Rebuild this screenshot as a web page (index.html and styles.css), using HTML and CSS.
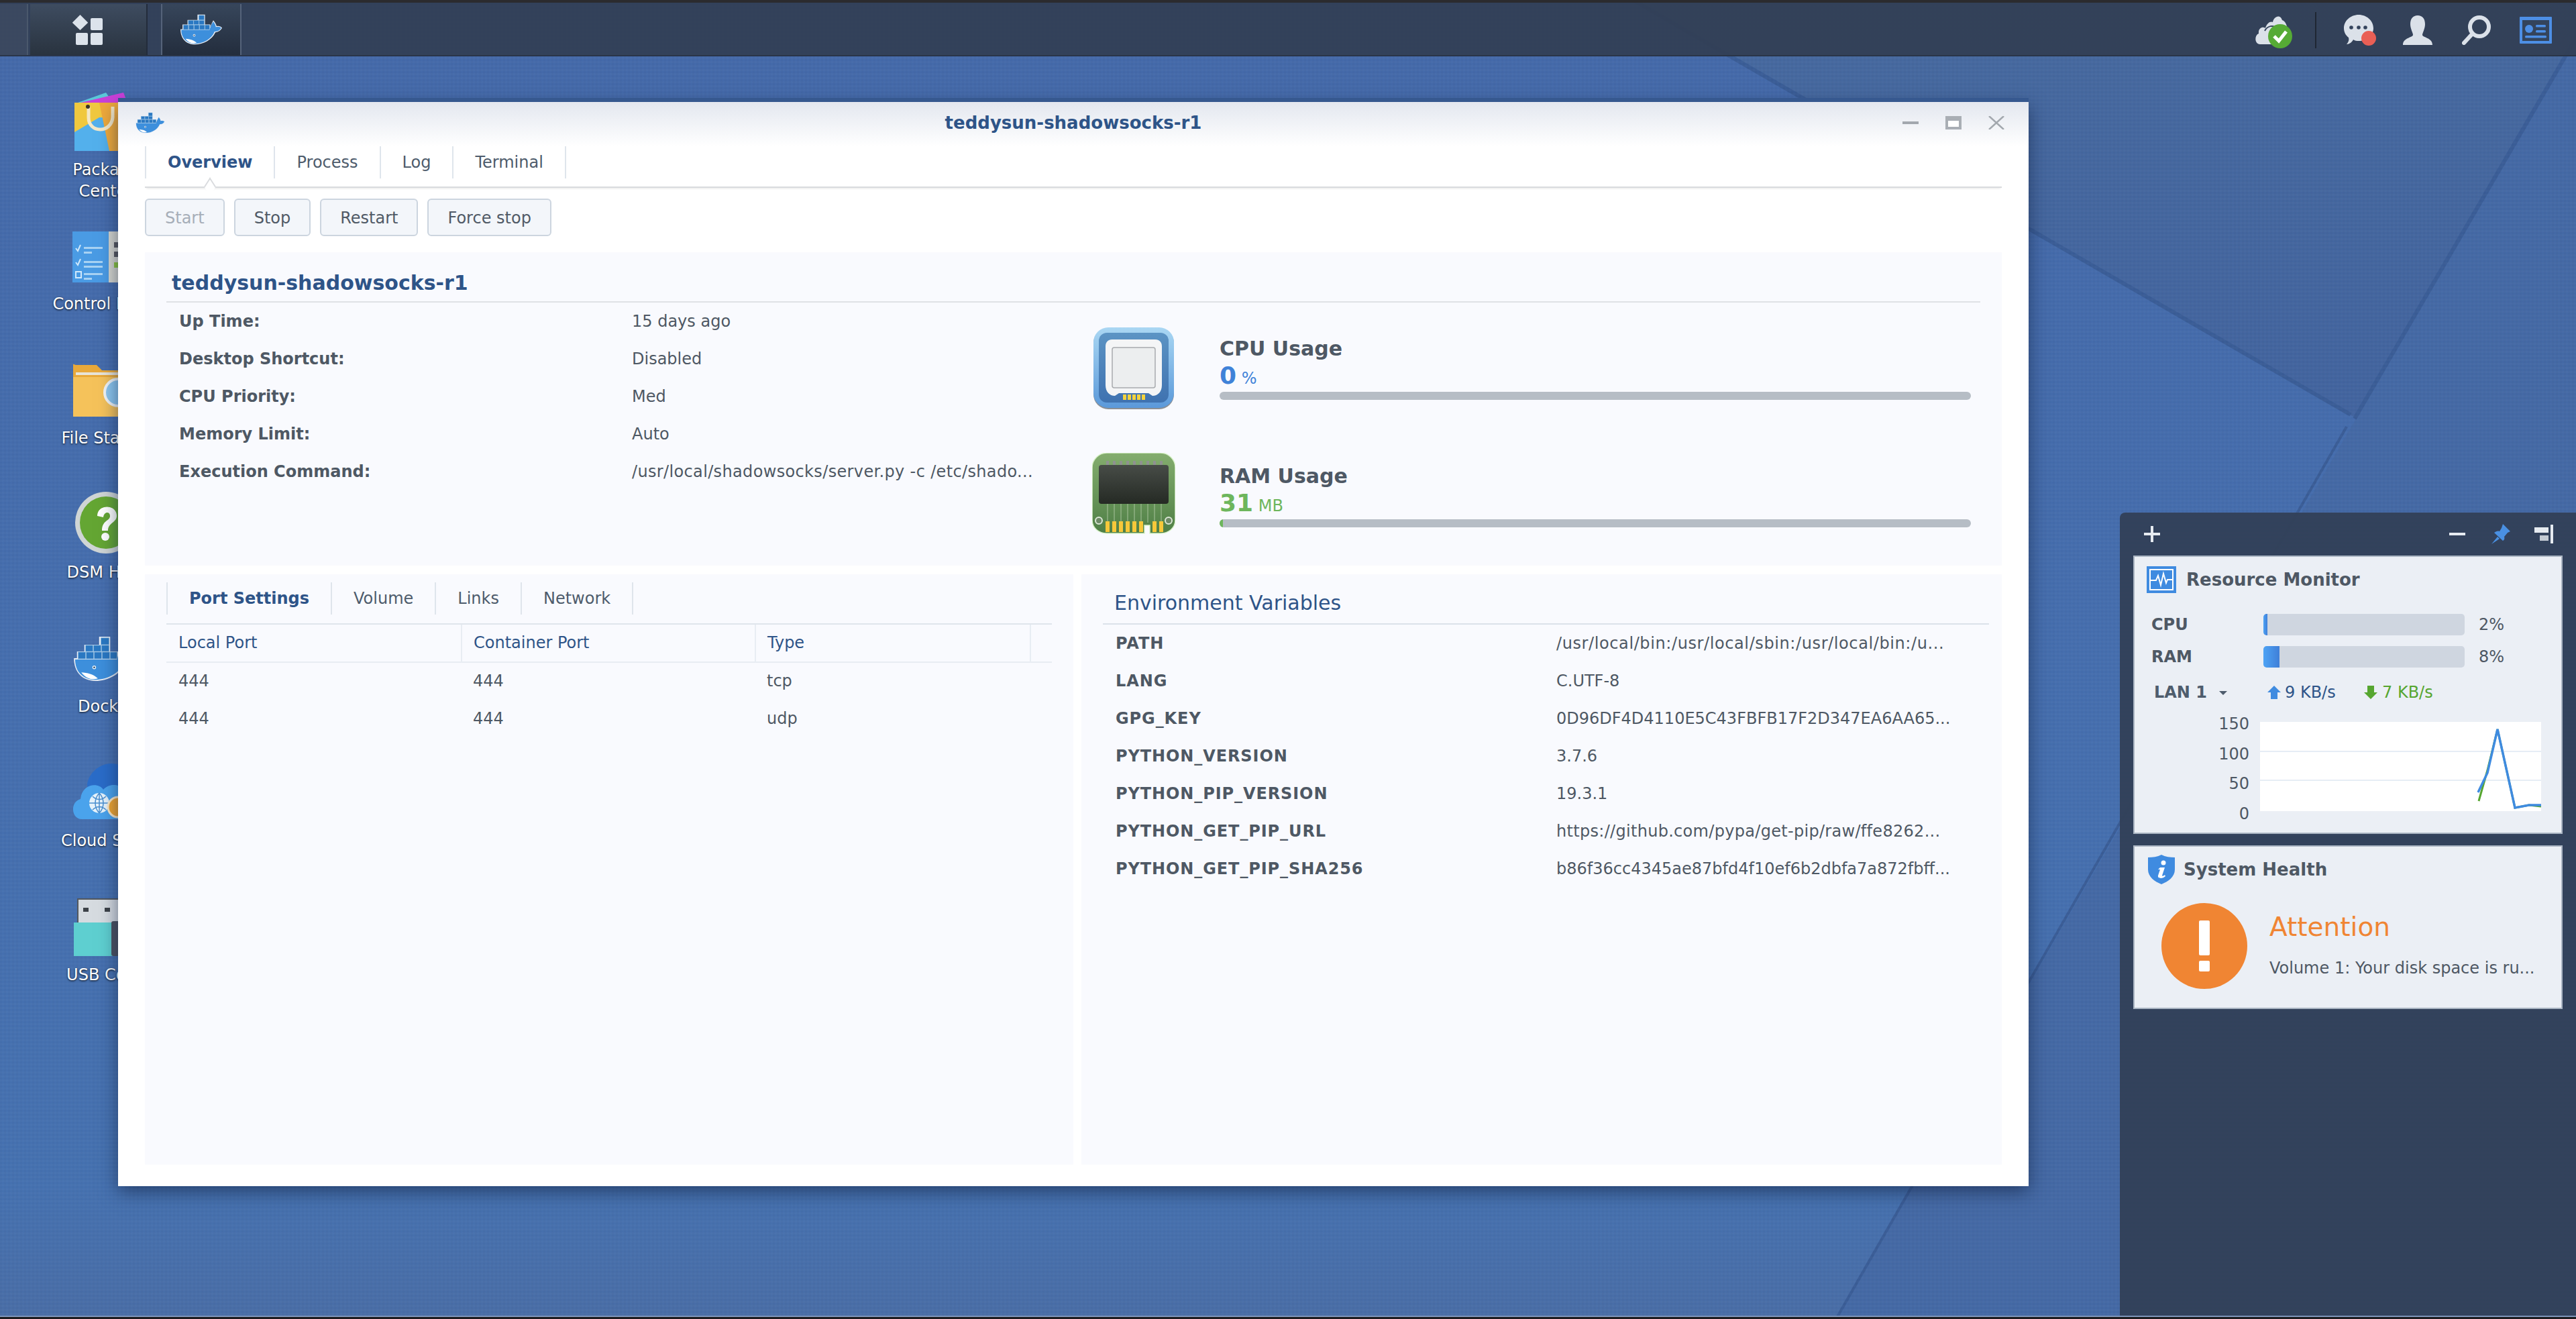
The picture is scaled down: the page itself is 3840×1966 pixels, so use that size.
FILE: index.html
```html
<!DOCTYPE html>
<html lang="en">
<head>
    <meta charset="UTF-8">
    <title>teddysun-shadowsocks-r1</title>
    <link rel="stylesheet" href="styles.css">
</head>
<body>
    <svg class="sprites" width="0" height="0">
        <symbol id="whale" viewBox="0 0 100 72">
            <path d="M41 0H59V13H59V24H72V38H70C72 28 75 22 79 14C83 19 86 24 87 28C92 27 97 28 100 32C96 40 89 42 84 43C76 61 55 72 35 72C14 72 0 58 0 35H5V24H17V13H41Z" fill="#e8eef5"/>
            <path d="M2 37H70C72 29 75 23 79 17C82 21 85 26 85 30C90 29 94 29 98 32C94 39 88 41 82 41C75 59 55 70 35 70C15 70 2 57 2 37Z" fill="#3d8fdc"/>
            <g fill="#2a78c2" stroke="#86b6dd" stroke-width=".8">
                <rect x="44" y="2" width="13" height="11"/>
                <rect x="19" y="14" width="12" height="10"/><rect x="32" y="14" width="12" height="10"/><rect x="45" y="14" width="12" height="10"/>
                <rect x="7" y="25" width="12" height="11"/><rect x="20" y="25" width="12" height="11"/><rect x="33" y="25" width="12" height="11"/><rect x="46" y="25" width="12" height="11"/><rect x="59" y="25" width="11" height="11"/>
            </g>
            <path d="M12 58C22 59 31 60 39 68C28 71 19 67 12 58Z" fill="#fff"/>
            <circle cx="33" cy="50" r="3" fill="#e8f2fb"/>
            <circle cx="33" cy="50" r="1.4" fill="#27435f"/>
        </symbol>
    </svg>

    <svg class="wallpaper" viewBox="0 0 3840 1966" preserveAspectRatio="none">
        <defs>
            <linearGradient id="wall-main" x1="0" y1="0" x2="0" y2="1">
                <stop offset="0" stop-color="#4469a9"/>
                <stop offset=".5" stop-color="#456eae"/>
                <stop offset=".9" stop-color="#4571b0"/>
                <stop offset="1" stop-color="#496da6"/>
            </linearGradient>
            <linearGradient id="wall-dark" x1="0" y1="0" x2="0" y2="1">
                <stop offset="0" stop-color="#46699f"/>
                <stop offset="1" stop-color="#42649f"/>
            </linearGradient>
        </defs>
        <rect width="3840" height="1966" fill="url(#wall-main)"/>
        <polygon points="2434,0 3840,0 3840,60 3510,622" fill="url(#wall-dark)"/>
        <polygon points="3840,60 3512,624 2737,1966 3840,1966" fill="#4469a5"/>
        <polyline points="2434,0 3504,618" fill="none" stroke="#3a5d97" stroke-width="6"/>
        <polyline points="3838,60 3510,624" fill="none" stroke="#3a5d97" stroke-width="6"/>
        <polyline points="3498,636 2737,1966" fill="none" stroke="#3a5d97" stroke-width="4"/>
    </svg>
    <div class="weave"></div>

    <header class="taskbar">
        <div class="bar-stub"></div>
        <div class="bar-start">
            <svg class="start-icon" viewBox="0 0 45 45">
                <polygon points="11.500,0 23,11.500 23,12 11.500,23 0,12 0,11.500" fill="#dce3eb"/>
                <rect x="27" y="5" width="18" height="18" rx="2" fill="#dce3eb"/>
                <rect x="5" y="27" width="18" height="18" rx="2" fill="#dce3eb"/>
                <rect x="27" y="27" width="18" height="18" rx="2" fill="#dce3eb"/>
            </svg>
        </div>
        <div class="bar-app">
            <svg class="bar-whale"><use href="#whale"/></svg>
        </div>
        <div class="tray">
            <svg class="tray-cloud" viewBox="0 0 56 50">
                <path d="M8 44C0 44 -1 31 6 28C5 20 12 17 16 20C18 12 24 9 27 11C28 3 38 -2 41 8C47 10 50 20 48 26L46 44Z" fill="#dbe1e9"/>
                <path d="M15 24C19 16 28 15 33 20" fill="none" stroke="#34445c" stroke-width="2"/>
                <ellipse cx="38" cy="32" rx="18" ry="18" fill="#56ab35"/>
                <path d="M29 32L36 39L47 25" fill="none" stroke="#fff" stroke-width="5"/>
            </svg>
            <div class="tray-sep"></div>
            <svg class="tray-chat" viewBox="0 0 48 46">
                <path d="M22 0C34 0 44 9 44 20C44 31 34 39 22 39C19 39 17 39 14 37C12 41 8 44 4 44C7 41 8 37 7 34C2 30 0 25 0 20C0 9 10 0 22 0Z" fill="#dbe1e9"/>
                <circle cx="11" cy="19" r="2.800" fill="#34445c"/><circle cx="22" cy="19" r="2.800" fill="#34445c"/><circle cx="32" cy="19" r="2.800" fill="#34445c"/>
                <ellipse cx="37" cy="35" rx="11" ry="11" fill="#e95f55"/>
            </svg>
            <svg class="tray-user" viewBox="0 0 44 44">
                <path d="M22 0C29 0 33 5 33 13C33 20 29 26 29 29C29 33 44 33 44 44H0C0 33 15 33 15 29C15 26 11 20 11 13C11 5 15 0 22 0Z" fill="#dbe1e9"/>
            </svg>
            <svg class="tray-search" viewBox="0 0 44 44">
                <circle cx="26" cy="17" r="14" fill="none" stroke="#dbe1e9" stroke-width="6"/>
                <path d="M14 29L3 41" stroke="#dbe1e9" stroke-width="6" stroke-linecap="round"/>
            </svg>
            <svg class="tray-card" viewBox="0 0 48 40">
                <rect width="48" height="40" rx="1" fill="#4d8fe6"/>
                <rect x="4" y="5" width="40" height="31" fill="#34445c"/>
                <ellipse cx="14" cy="18" rx="6" ry="6" fill="#4d8fe6"/>
                <rect x="24" y="12" width="15" height="3.500" rx="1.500" fill="#4d8fe6"/>
                <rect x="24" y="20" width="15" height="3.500" rx="1.500" fill="#4d8fe6"/>
                <rect x="8" y="28" width="32" height="3.500" rx="1.500" fill="#4d8fe6"/>
            </svg>
        </div>
    </header>

    <nav class="desk-icons">
        <div class="desk-item">
            <svg class="desk-icon" viewBox="0 0 100 100">
                <polygon points="8,28 50,13 60,28" fill="#5ac8d8"/>
                <polygon points="12,28 76,13 82,28" fill="#c940d8"/>
                <rect x="3" y="28" width="96" height="72" fill="#f0c83f"/>
                <polygon points="3,72 3,100 55,100 63,50 40,50" fill="#53b0ec"/>
                <polygon points="40,28 99,28 99,100 55,100" fill="#eea93b"/>
                <path d="M24 34V50C24 74 58 74 60 50V34" fill="none" stroke="#f3e8c8" stroke-width="5"/>
                <circle cx="23" cy="34" r="3" fill="#3a3325"/>
            </svg>
            <div class="desk-label">Package<br>Center</div>
        </div>
        <div class="desk-item">
            <svg class="desk-icon" viewBox="0 0 100 100">
                <rect x="0" y="20" width="100" height="76" fill="#4a9be4"/>
                <rect x="54" y="20" width="46" height="76" fill="#d6d6ce"/>
                <rect x="62" y="36" width="8" height="8" fill="#58585c"/><rect x="62" y="50" width="8" height="8" fill="#58585c"/><rect x="62" y="66" width="8" height="8" fill="#8cc63f"/>
                <path d="M5 45L8 49L12 40M5 66L8 70L12 61" fill="none" stroke="#d0e8fb" stroke-width="2"/>
                <rect x="5" y="80" width="8" height="9" fill="none" stroke="#d0e8fb" stroke-width="2"/>
                <g fill="#a8d2f3">
                    <rect x="17" y="43" width="28" height="3"/><rect x="17" y="50" width="12" height="3"/><rect x="17" y="64" width="28" height="3"/><rect x="17" y="71" width="28" height="3"/><rect x="17" y="82" width="28" height="3"/><rect x="17" y="89" width="12" height="3"/>
                </g>
            </svg>
            <div class="desk-label">Control Panel</div>
        </div>
        <div class="desk-item">
            <svg class="desk-icon" viewBox="0 0 100 100">
                <path d="M1 19C1 16 3 19 6 19H36L44 27H99V96H1Z" fill="#e9a93a"/>
                <path d="M1 37H99V96H1Z" fill="#f5c25a"/>
                <rect x="5" y="30" width="90" height="4" fill="#e8e4d8"/>
                <circle cx="68" cy="60" r="20" fill="#8cc6ee" stroke="#f0f4f6" stroke-width="4"/>
            </svg>
            <div class="desk-label">File Station</div>
        </div>
        <div class="desk-item">
            <svg class="desk-icon" viewBox="0 0 100 100">
                <circle cx="50" cy="54" r="46" fill="#cfd5d5"/>
                <circle cx="50" cy="54" r="39" fill="#64a633"/>
                <path d="M37 44C37 26 66 26 66 44C66 54 53 54 53 66H44C44 50 56 52 56 44C56 37 47 37 46 46Z" fill="#fff"/>
                <circle cx="49" cy="75" r="6" fill="#fff"/>
            </svg>
            <div class="desk-label">DSM Help</div>
        </div>
        <div class="desk-item">
            <svg class="desk-icon" viewBox="0 0 100 100">
                <use href="#whale" x="2" y="24" width="92" height="66"/>
            </svg>
            <div class="desk-label">Docker</div>
        </div>
        <div class="desk-item">
            <svg class="desk-icon" viewBox="0 0 100 100">
                <path d="M22 46C22 28 44 8 66 14C84 18 92 34 90 50L70 70H30Z" fill="#2a6cc8"/>
                <path d="M14 96C-2 96 -4 70 12 66C14 44 38 40 46 52C58 38 84 46 82 68C98 70 100 96 84 96Z" fill="#4aa3ec"/>
                <circle cx="40" cy="72" r="15" fill="#e6f3fb"/>
                <path d="M25 72H55M40 57V87M30 62C36 68 44 68 50 62M30 82C36 76 44 76 50 82M40 57C32 66 32 78 40 87M40 57C48 66 48 78 40 87" fill="none" stroke="#4a8fcf" stroke-width="1.500"/>
                <circle cx="68" cy="78" r="15" fill="#f0a52f" stroke="#fbe9c8" stroke-width="3"/>
            </svg>
            <div class="desk-label">Cloud Sync</div>
        </div>
        <div class="desk-item">
            <svg class="desk-icon" viewBox="0 0 100 100">
                <rect x="8" y="15" width="62" height="40" fill="#d6dbe0" stroke="#53585e" stroke-width="2"/>
                <rect x="16" y="28" width="8" height="6" fill="#3d4248"/><rect x="48" y="28" width="8" height="6" fill="#3d4248"/>
                <rect x="2" y="50" width="62" height="50" fill="#5ecfd0"/>
                <rect x="58" y="48" width="42" height="52" rx="3" fill="#4d5260"/>
            </svg>
            <div class="desk-label">USB Copy</div>
        </div>
    </nav>

    <main class="window">
        <div class="title-bar">
            <svg class="title-whale"><use href="#whale"/></svg>
            <div class="title-text">teddysun-shadowsocks-r1</div>
            <div class="win-controls">
                <svg viewBox="0 0 24 20"><rect x="0" y="8" width="24" height="4" fill="#a3a8ae"/></svg>
                <svg viewBox="0 0 24 20"><rect width="24" height="20" fill="#a9aeb4"/><rect x="4" y="7" width="16" height="9" fill="#fff"/></svg>
                <svg viewBox="0 0 24 20"><path d="M1 0L23 20M23 0L1 20" stroke="#a3a8ae" stroke-width="2.500"/></svg>
            </div>
        </div>

        <div class="tabs">
            <div class="tab active">Overview</div>
            <div class="tab">Process</div>
            <div class="tab">Log</div>
            <div class="tab">Terminal</div>
        </div>

        <div class="toolbar">
            <button class="btn" disabled>Start</button>
            <button class="btn">Stop</button>
            <button class="btn">Restart</button>
            <button class="btn">Force stop</button>
        </div>

        <section class="panel overview">
            <h2 class="overview-title">teddysun-shadowsocks-r1</h2>
            <div class="overview-body">
                <div class="kv-list info-list">
                    <div class="kv-key">Up Time:</div><div class="kv-val">15 days ago</div>
                    <div class="kv-key">Desktop Shortcut:</div><div class="kv-val">Disabled</div>
                    <div class="kv-key">CPU Priority:</div><div class="kv-val">Med</div>
                    <div class="kv-key">Memory Limit:</div><div class="kv-val">Auto</div>
                    <div class="kv-key">Execution Command:</div><div class="kv-val cmd-val">/usr/local/shadowsocks/server.py -c /etc/shado...</div>
                </div>
                <div class="stats">
                    <div class="stat">
                        <svg class="stat-icon" viewBox="0 0 124 126">
                            <defs>
                                <linearGradient id="cpu-out" x1="0" y1="0" x2="0" y2="1"><stop offset="0" stop-color="#aad7f3"/><stop offset="1" stop-color="#5b99da"/></linearGradient>
                                <linearGradient id="cpu-in" x1="0" y1="0" x2="0" y2="1"><stop offset="0" stop-color="#5c94c4"/><stop offset="1" stop-color="#3f72b0"/></linearGradient>
                            </defs>
                            <rect x="2" y="2" width="120" height="120" rx="22" fill="#8b8f94"/>
                            <rect x="2" y="0" width="120" height="120" rx="22" fill="url(#cpu-out)"/>
                            <rect x="10" y="8" width="104" height="104" rx="12" fill="url(#cpu-in)"/>
                            <path d="M20 28C20 22 24 18 30 18H94C100 18 104 22 104 28V86C104 96 98 102 90 102L84 98H40L34 102C26 102 20 96 20 86Z" fill="#f4f5f6"/>
                            <rect x="30" y="30" width="64" height="60" rx="3" fill="#eceeef" stroke="#a8abae" stroke-width="1.500"/>
                            <g fill="#f5d33c">
                                <rect x="46" y="100" width="5" height="8"/><rect x="53" y="100" width="5" height="8"/><rect x="60" y="100" width="5" height="8"/><rect x="67" y="100" width="5" height="8"/><rect x="74" y="100" width="5" height="8"/>
                            </g>
                        </svg>
                        <div class="stat-text">
                            <div class="stat-name">CPU Usage</div>
                            <div class="stat-value cpu"><b>0</b> <span>%</span></div>
                            <div class="stat-bar"></div>
                        </div>
                    </div>
                    <div class="stat">
                        <svg class="stat-icon ram-icon" viewBox="0 0 124 126">
                            <defs>
                                <linearGradient id="ram-pcb" x1="0" y1="0" x2="0" y2="1"><stop offset="0" stop-color="#84ad6e"/><stop offset="1" stop-color="#4f7f46"/></linearGradient>
                                <linearGradient id="ram-chip" x1="0" y1="0" x2="0" y2="1"><stop offset="0" stop-color="#474c47"/><stop offset="1" stop-color="#252a24"/></linearGradient>
                            </defs>
                            <path d="M22 0H102C114 0 124 10 124 22V100C124 112 114 120 102 120H86V108H78V120H22C10 120 0 112 0 100V22C0 10 10 0 22 0Z" fill="url(#ram-pcb)" stroke="#d8f2c8" stroke-width="1.500"/>
                            <g fill="#8f9290">
                                <rect x="21" y="12" width="4" height="6"/><rect x="31" y="12" width="4" height="6"/><rect x="41" y="12" width="4" height="6"/><rect x="51" y="12" width="4" height="6"/><rect x="61" y="12" width="4" height="6"/><rect x="71" y="12" width="4" height="6"/><rect x="81" y="12" width="4" height="6"/><rect x="91" y="12" width="4" height="6"/><rect x="101" y="12" width="4" height="6"/>
                            </g>
                            <rect x="10" y="18" width="104" height="58" rx="4" fill="url(#ram-chip)"/>
                            <g stroke="#a8c29c" stroke-width="1">
                                <path d="M23 76V104M33 76V104M43 76V104M53 76V104M63 76V104M73 76V104M83 76V104M93 76V104M103 76V104"/>
                            </g>
                            <g fill="#f6c83a">
                                <rect x="20" y="102" width="6" height="16"/><rect x="30" y="102" width="6" height="16"/><rect x="40" y="102" width="6" height="16"/><rect x="50" y="102" width="6" height="16"/><rect x="60" y="102" width="6" height="16"/><rect x="70" y="102" width="6" height="16"/><rect x="90" y="102" width="6" height="16"/><rect x="100" y="102" width="6" height="16"/>
                            </g>
                            <circle cx="10" cy="101" r="5" fill="#6d8a66" stroke="#dbe6d6" stroke-width="2"/>
                            <circle cx="114" cy="101" r="5" fill="#6d8a66" stroke="#dbe6d6" stroke-width="2"/>
                        </svg>
                        <div class="stat-text">
                            <div class="stat-name">RAM Usage</div>
                            <div class="stat-value ram"><b>31</b> <span>MB</span></div>
                            <div class="stat-bar"><div class="stat-fill"></div></div>
                        </div>
                    </div>
                </div>
            </div>
        </section>

        <div class="lower">
            <section class="panel ports">
                <div class="sub-tabs">
                    <div class="tab active-sub">Port Settings</div>
                    <div class="tab">Volume</div>
                    <div class="tab">Links</div>
                    <div class="tab">Network</div>
                </div>
                <div class="port-table">
                    <div class="port-head">
                        <div>Local Port</div>
                        <div>Container Port</div>
                        <div>Type</div>
                        <div></div>
                    </div>
                    <div class="port-row"><div>444</div><div>444</div><div>tcp</div></div>
                    <div class="port-row"><div>444</div><div>444</div><div>udp</div></div>
                </div>
            </section>
            <section class="panel env">
                <h3 class="env-title">Environment Variables</h3>
                <div class="kv-list env-list">
                    <div class="kv-key">PATH</div><div class="kv-val path-val">/usr/local/bin:/usr/local/sbin:/usr/local/bin:/u...</div>
                    <div class="kv-key">LANG</div><div class="kv-val">C.UTF-8</div>
                    <div class="kv-key">GPG_KEY</div><div class="kv-val">0D96DF4D4110E5C43FBFB17F2D347EA6AA65...</div>
                    <div class="kv-key">PYTHON_VERSION</div><div class="kv-val">3.7.6</div>
                    <div class="kv-key">PYTHON_PIP_VERSION</div><div class="kv-val">19.3.1</div>
                    <div class="kv-key">PYTHON_GET_PIP_URL</div><div class="kv-val url-val">https://github.com/pypa/get-pip/raw/ffe8262...</div>
                    <div class="kv-key">PYTHON_GET_PIP_SHA256</div><div class="kv-val">b86f36cc4345ae87bfd4f10ef6b2dbfa7a872fbff...</div>
                </div>
            </section>
        </div>
    </main>

    <aside class="widgets">
        <div class="widget-bar">
            <svg class="w-plus" viewBox="0 0 24 24"><path d="M12 0V24M0 12H24" stroke="#e6ebf1" stroke-width="4"/></svg>
            <svg class="w-minus" viewBox="0 0 24 24"><path d="M0 12H24" stroke="#e6ebf1" stroke-width="4"/></svg>
            <svg class="w-pin" viewBox="0 0 28 30">
                <path d="M17 0L28 11L24 13L19 19C20 22 19 24 17 25L4 13C7 11 9 10 12 11L15 6Z" fill="#4a90e2"/>
                <path d="M9 19L0 30L12 22Z" fill="#4a90e2"/>
            </svg>
            <svg class="w-dock" viewBox="0 0 28 28">
                <rect x="24" y="0" width="4" height="28" fill="#e6ebf1"/>
                <rect x="0" y="4" width="21" height="8" fill="#e6ebf1"/>
                <rect x="8" y="16" width="13" height="8" fill="#c2cad4"/>
            </svg>
        </div>

        <div class="card monitor">
            <div class="card-head">
                <svg class="card-icon" viewBox="0 0 44 40">
                    <rect width="44" height="40" fill="#3f8be0"/>
                    <rect x="5" y="5" width="34" height="30" fill="none" stroke="#fff" stroke-width="2"/>
                    <path d="M5 21H14L17 14L21 28L25 11L29 25L31 20H39" fill="none" stroke="#fff" stroke-width="2"/>
                </svg>
                <div class="card-title">Resource Monitor</div>
            </div>
            <div class="usage">
                <div class="usage-name">CPU</div>
                <div class="usage-bar"><div class="usage-fill" style="width: 6px"></div></div>
                <div class="usage-pct">2%</div>
                <div class="usage-name">RAM</div>
                <div class="usage-bar"><div class="usage-fill" style="width: 24px"></div></div>
                <div class="usage-pct">8%</div>
            </div>
            <div class="lan">
                <div class="lan-name">LAN 1 <i class="lan-caret"></i></div>
                <svg class="lan-arrow" viewBox="0 0 20 20"><path d="M10 0L20 10H15V20H5V10H0Z" fill="#3f8be0"/></svg>
                <div class="lan-up">9 KB/s</div>
                <svg class="lan-arrow" viewBox="0 0 20 20"><path d="M5 0H15V10H20L10 20L0 10H5Z" fill="#56a630"/></svg>
                <div class="lan-down">7 KB/s</div>
            </div>
            <div class="chart">
                <div class="chart-axis"><span>150</span><span>100</span><span>50</span><span>0</span></div>
                <svg class="chart-plot" viewBox="0 0 419 133">
                    <rect width="419" height="133" fill="#fff"/>
                    <path d="M0 44H419M0 87H419" stroke="#e6edf5" stroke-width="2"/>
                    <polyline points="326,118 339,72 354,11 380,128 401,124 419,126" fill="none" stroke="#56a630" stroke-width="3"/>
                    <polyline points="325,105 339,76 354,11 380,128 401,124 419,124" fill="none" stroke="#3f8be0" stroke-width="3.500"/>
                </svg>
            </div>
        </div>

        <div class="card health">
            <div class="card-head">
                <svg class="card-icon shield" viewBox="0 0 40 44">
                    <path d="M20 0C26 3 33 4 40 4V22C40 33 30 40 20 44C10 40 0 33 0 22V4C7 4 14 3 20 0Z" fill="#3f8be0"/>
                    <circle cx="23" cy="12" r="3.500" fill="#fff"/>
                    <path d="M18 19H25L21 31C21 32 23 32 25 30L26 32C22 36 14 36 15 31L18 22H15Z" fill="#fff"/>
                </svg>
                <div class="card-title">System Health</div>
            </div>
            <div class="health-body">
                <svg class="alert-icon" viewBox="0 0 128 128">
                    <circle cx="64" cy="64" r="64" fill="#f08533"/>
                    <rect x="56" y="26" width="16" height="52" rx="2" fill="#fff"/>
                    <rect x="56" y="86" width="16" height="16" rx="2" fill="#fff"/>
                </svg>
                <div class="health-text">
                    <div class="health-status">Attention</div>
                    <div class="health-msg">Volume 1: Your disk space is ru...</div>
                </div>
            </div>
        </div>
    </aside>

    <div class="screen-edge"></div>
</body>
</html>
```
FILE: styles.css
```css
* {
    box-sizing: border-box;
}

html, body {
    margin: 0;
    height: 100%;
    overflow: hidden;
}

body {
    position: relative;
    font-family: "DejaVu Sans", Verdana, sans-serif;
    font-size: 24px;
    color: #4e5864;
    background: #4469a9;
}

.sprites {
    position: absolute;
}

.wallpaper, .weave {
    position: absolute;
    inset: 0;
    width: 100%;
    height: 100%;
}

.weave {
    background-image:
        repeating-linear-gradient(0deg, rgba(255, 255, 255, 0.02) 0 3px, transparent 3px 6px),
        repeating-linear-gradient(90deg, rgba(0, 0, 0, 0.02) 0 3px, transparent 3px 6px);
}

/* taskbar */
.taskbar {
    position: relative;
    display: flex;
    height: 84px;
    padding-top: 6px;
    background: rgba(50, 62, 84, 0.93);
    border-top: 4px solid #2b2b2e;
    border-bottom: 2px solid #2a3548;
}

.bar-stub {
    width: 42px;
    background: rgba(255, 255, 255, 0.04);
    border-right: 2px solid #4a586c;
    margin-top: -4px;
}

.bar-start {
    width: 175px;
    margin: -4px 0 0 3px;
    display: flex;
    justify-content: center;
    align-items: center;
    background: linear-gradient(#3e4c60, #29333f);
    border-right: 2px solid #232c3b;
}

.start-icon {
    width: 45px;
    height: 45px;
    margin: 1px 0 0 -2px;
}

.bar-app {
    width: 120px;
    margin: -4px 0 0 20px;
    display: flex;
    justify-content: center;
    align-items: center;
    background: linear-gradient(#37465b, #232d3d);
    border-left: 2px solid #55637a;
    border-right: 2px solid #55637a;
}

.bar-whale {
    width: 62px;
    height: 46px;
}

.tray {
    margin-left: auto;
    display: flex;
    align-items: center;
    padding: 0 36px 2px 0;
}

.tray-cloud { width: 56px; height: 50px; margin-top: 4px; }
.tray-sep { width: 2px; height: 54px; margin: 0 41px 0 34px; background: #1e2633; }
.tray-chat { width: 48px; height: 46px; }
.tray-user { width: 44px; height: 44px; margin-left: 40px; }
.tray-search { width: 44px; height: 44px; margin-left: 44px; }
.tray-card { width: 48px; height: 40px; margin-left: 42px; }

/* desktop shortcuts */
.desk-icons {
    position: absolute;
    left: 58px;
    top: 125px;
    width: 200px;
    display: grid;
    grid-auto-rows: 200px;
}

.desk-icon {
    display: block;
    width: 100px;
    height: 100px;
    margin: 0 auto;
}

.desk-label {
    margin-top: 12px;
    text-align: center;
    line-height: 32px;
    color: #fff;
    text-shadow: 0 1px 3px rgba(0, 0, 0, 0.9);
}

/* application window */
.window {
    position: absolute;
    left: 176px;
    top: 152px;
    width: 2848px;
    height: 1616px;
    padding: 0 40px 32px;
    display: flex;
    flex-direction: column;
    background: #fff;
    box-shadow: 0 -6px 0 #36588f, 0 8px 26px rgba(16, 32, 64, 0.6);
}

.title-bar {
    display: grid;
    grid-template-columns: 1fr auto 1fr;
    align-items: center;
    height: 66px;
    margin: 0 -40px;
    padding: 0 36px 4px;
    background: linear-gradient(#e3e7ef, #fff);
}

.title-whale {
    width: 44px;
    height: 32px;
    margin-left: -10px;
}

.title-text {
    font-size: 26px;
    font-weight: bold;
    color: #2e5488;
}

.win-controls {
    display: flex;
    justify-content: flex-end;
    gap: 40px;
}

.win-controls svg {
    width: 24px;
    height: 20px;
}

.tabs {
    position: relative;
    display: flex;
    padding-bottom: 12px;
    border-bottom: 2px solid #d9dbde;
    box-shadow: 0 3px 3px -2px rgba(0, 0, 0, 0.1);
}

.tab {
    height: 48px;
    line-height: 48px;
    padding: 0 32px;
    border-right: 2px solid #dfe5ec;
    color: #4e5c6c;
}

.tab:first-child {
    border-left: 2px solid #dfe5ec;
}

.tab.active {
    position: relative;
    font-weight: bold;
    color: #2e5488;
}

.tab.active::after {
    content: "";
    position: absolute;
    left: 87px;
    top: 52px;
    width: 14px;
    height: 14px;
    background: #fff;
    border-left: 2px solid #d9dbde;
    border-top: 2px solid #d9dbde;
    transform: rotate(45deg) skew(12deg, 12deg);
}

.toolbar {
    display: flex;
    gap: 14px;
    margin-top: 16px;
}

.btn {
    height: 56px;
    padding: 2px 28px 0;
    font: inherit;
    color: #505a66;
    background: #f3f6fa;
    border: 2px solid #ccd5df;
    border-radius: 6px;
}

.btn:disabled {
    color: #a6aeb8;
}

.panel {
    background: #f9fafe;
}

.overview {
    height: 467px;
    margin-top: 24px;
}

.overview-title {
    height: 75px;
    margin: 0 32px;
    padding: 28px 0 0 8px;
    font-size: 30px;
    line-height: 36px;
    color: #2e5488;
    border-bottom: 2px solid #dfe2e5;
}

.overview-body {
    display: flex;
}

.kv-list {
    display: grid;
    row-gap: 4px;
    padding-top: 2px;
    line-height: 52px;
    align-content: start;
}

.kv-key {
    font-weight: bold;
    color: #4e5864;
    white-space: nowrap;
}

.kv-val {
    white-space: nowrap;
}

.cmd-val {
    letter-spacing: 0.35px;
}

.path-val {
    letter-spacing: 0.6px;
}

.url-val {
    letter-spacing: 0.3px;
}

.info-list {
    grid-template-columns: 675px 1fr;
    width: 1412px;
    padding-left: 51px;
}

.stats {
    width: 1356px;
    padding-top: 37px;
}

.stat {
    display: flex;
    gap: 66px;
    height: 190px;
}

.stat-icon {
    flex: none;
    width: 124px;
    height: 126px;
}

.ram-icon {
    margin-top: -3px;
}

.stat-text {
    flex: 1;
    padding-top: 14px;
}

.stat-name {
    font-size: 30px;
    font-weight: bold;
    line-height: 36px;
    color: #4e5864;
}

.stat-value {
    height: 46px;
    padding-top: 4px;
    line-height: 36px;
    font-size: 24px;
}

.stat-value b {
    font-size: 36px;
}

.stat-value.cpu {
    color: #3f82d8;
}

.stat-value.ram {
    color: #6db65c;
}

.stat-bar {
    width: 1120px;
    height: 12px;
    border-radius: 6px;
    overflow: hidden;
    background: #b6bdc5;
}

.stat-fill {
    width: 5px;
    height: 100%;
    background: #6db65c;
}

.lower {
    flex: 1;
    display: grid;
    grid-template-columns: 1384px 1372px;
    gap: 12px;
    margin-top: 13px;
}

.sub-tabs {
    display: flex;
    margin: 12px 32px 0;
    padding-bottom: 13px;
    border-bottom: 2px solid #dfe5ec;
}

.tab.active-sub {
    font-weight: bold;
    color: #2e5488;
}

.port-table {
    margin: 0 32px;
}

.port-head, .port-row {
    display: grid;
    grid-template-columns: 439px 438px 410px 33px;
}

.port-head {
    height: 57px;
    border-bottom: 2px solid #e8edf3;
    line-height: 54px;
    color: #2e5488;
}

.port-head div {
    padding-left: 17px;
    border-left: 2px solid #e8edf3;
}

.port-head div:first-child {
    padding-left: 18px;
    border-left: 0;
}

.port-head div:last-child {
    border-left: 2px solid #e8edf3;
}

.port-row {
    height: 56px;
    line-height: 54px;
}

.port-row div {
    padding-left: 18px;
}

.env-title {
    height: 75px;
    margin: 0 19px 0 32px;
    padding: 25px 0 0 17px;
    font-size: 30px;
    font-weight: normal;
    line-height: 36px;
    color: #2e5488;
    border-bottom: 2px solid #dbe2ea;
}

.env-list {
    grid-template-columns: 657px 1fr;
    padding-left: 51px;
}

.env-list .kv-key {
    letter-spacing: 0.9px;
}

/* widgets on the right */
.widgets {
    position: absolute;
    left: 3160px;
    top: 764px;
    right: 0;
    bottom: 4px;
    padding: 0 20px;
    background: rgba(50, 65, 88, 0.96);
    border-top-left-radius: 8px;
}

.widget-bar {
    display: flex;
    align-items: center;
    height: 64px;
    padding: 0 14px 0 16px;
}

.w-plus { width: 24px; height: 24px; }
.w-minus { width: 24px; height: 24px; margin-left: auto; }
.w-pin { width: 28px; height: 30px; margin-left: 39px; }
.w-dock { width: 28px; height: 28px; margin-left: 36px; }

.card {
    border: 2px solid #a9b4c2;
    background: #ebeff5;
}

.monitor {
    height: 415px;
}

.health {
    height: 244px;
    margin-top: 17px;
}

.card-head {
    display: flex;
    align-items: center;
    height: 40px;
    margin-top: 14px;
    padding-left: 18px;
}

.card-icon {
    width: 44px;
    height: 40px;
}

.shield {
    width: 40px;
    height: 44px;
    margin-left: 2px;
    margin-right: -2px;
}

.card-title {
    margin-left: 15px;
    font-size: 26px;
    font-weight: bold;
    color: #4e5864;
}

.usage {
    display: grid;
    grid-template-columns: 167px 300px auto;
    grid-auto-rows: 32px;
    row-gap: 16px;
    margin-top: 31px;
    padding-left: 25px;
    align-items: center;
}

.usage-name {
    font-weight: bold;
}

.usage-bar {
    height: 32px;
    border-radius: 5px;
    overflow: hidden;
    background: #cfd6e0;
}

.usage-fill {
    height: 100%;
    background: linear-gradient(90deg, #4da3f5, #3f7fd8);
}

.usage-pct {
    padding-left: 21px;
}

.lan {
    display: flex;
    align-items: center;
    height: 30px;
    margin-top: 22px;
    padding-left: 29px;
}

.lan-name {
    width: 169px;
    font-weight: bold;
    color: #4e5c6c;
}

.lan-caret {
    display: inline-block;
    margin-left: 10px;
    vertical-align: middle;
    border: 6px solid transparent;
    border-top-color: #4e5c6c;
    border-bottom: 0;
}

.lan-arrow {
    width: 20px;
    height: 20px;
    flex: none;
}

.lan-up {
    width: 118px;
    margin-left: 6px;
    color: #2e5488;
}

.lan-down {
    margin-left: 7px;
    color: #56a630;
}

.chart {
    display: flex;
    margin-top: 29px;
}

.chart-axis {
    width: 171px;
    height: 158px;
    margin-top: -9px;
    display: flex;
    flex-direction: column;
    justify-content: space-between;
    align-items: flex-end;
    line-height: 24px;
}

.chart-plot {
    width: 419px;
    height: 133px;
    margin-left: 16px;
}

.health-body {
    display: flex;
    margin-top: 30px;
    padding-left: 40px;
}

.alert-icon {
    width: 128px;
    height: 128px;
    flex: none;
}

.health-text {
    margin-left: 33px;
}

.health-status {
    margin-top: 10px;
    font-size: 39px;
    line-height: 52px;
    color: #f08533;
}

.health-msg {
    margin-top: 20px;
    line-height: 30px;
    white-space: nowrap;
}

.screen-edge {
    position: absolute;
    left: 0;
    right: 0;
    bottom: 0;
    height: 5px;
    background: #1c1c20;
    border-top: 2px solid #7f96ba;
}
```
